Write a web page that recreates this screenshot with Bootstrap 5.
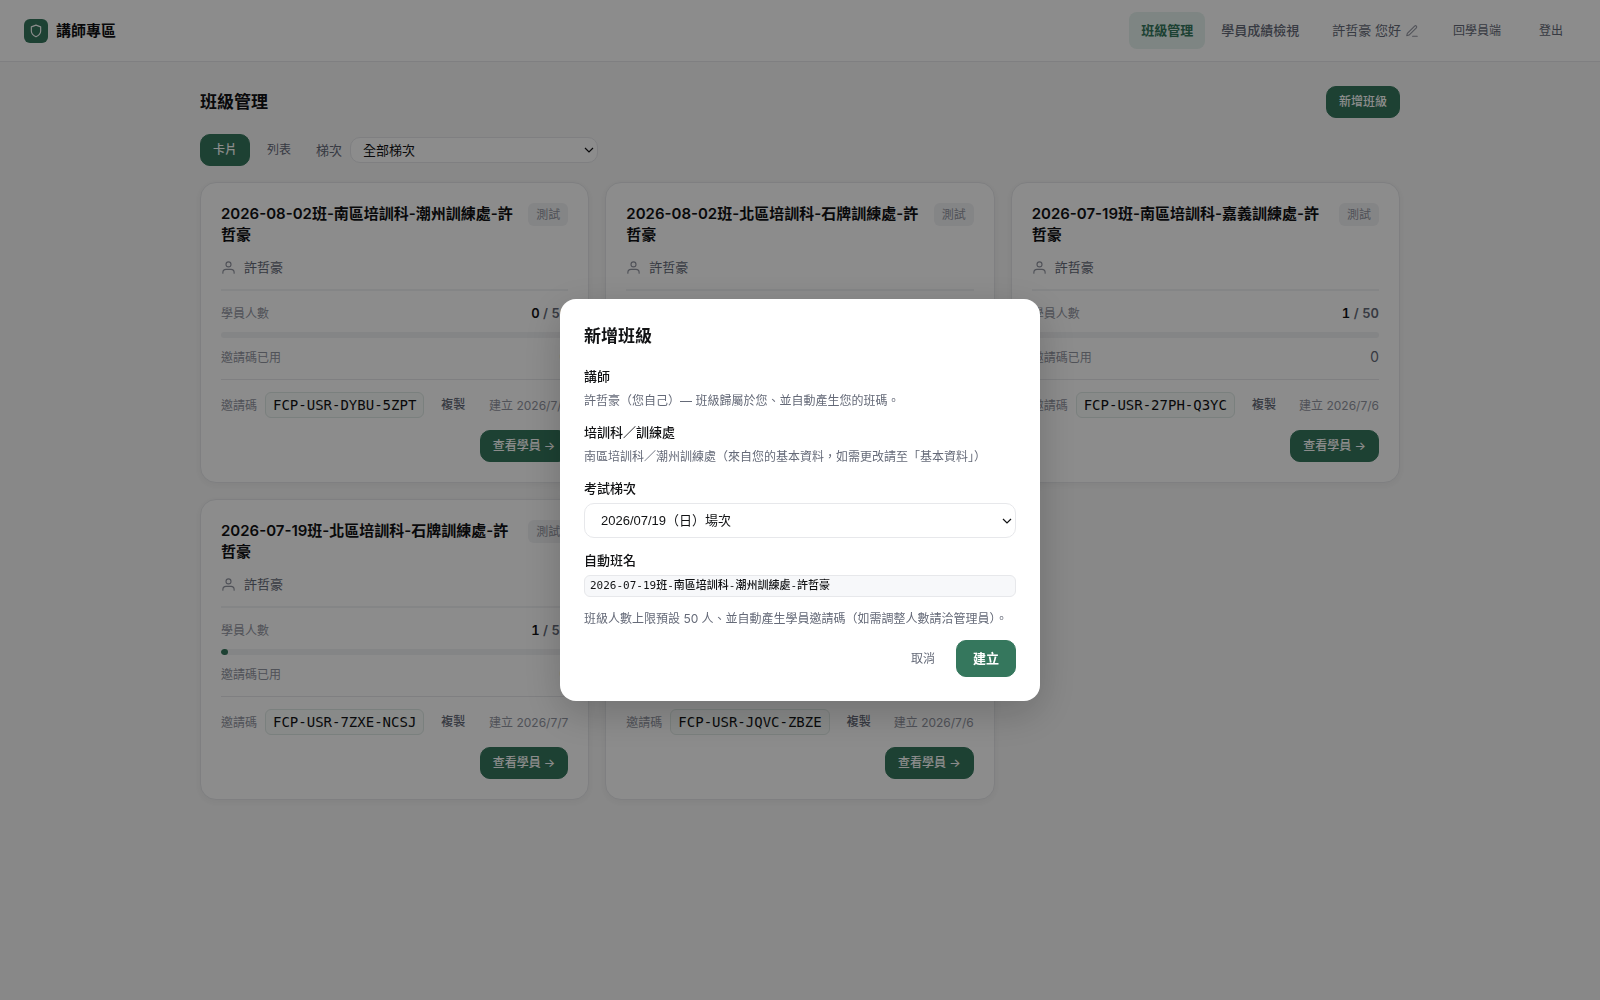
<!DOCTYPE html>
<html lang="zh-Hant">
<head>
<meta charset="utf-8">
<meta name="viewport" content="width=device-width, initial-scale=1">
<title>講師專區 - 班級管理</title>
<link href="https://cdn.jsdelivr.net/npm/bootstrap@5.3.0/dist/css/bootstrap.min.css" rel="stylesheet">
<style>
:root{--ink:#111214;--soft:#656a78;--faint:#9295a1;--line:#e7e8eb;--green:#35775d;--mist:#f1f2f4}
body{font-family:Inter,"Noto Sans CJK TC",sans-serif;font-size:13px;line-height:21px;color:var(--ink);background:#f8f8f8}
h1,h2,h3,p{margin:0}
.topbar{background:#fff;border-bottom:1px solid var(--line);padding:12px 24px}
.bar-items{gap:12px}
.brand-mark{width:24px;height:24px;border-radius:6px;background:var(--green);color:#fff}
.brand-name{font-size:15px;font-weight:600;color:var(--ink)}
.tab{padding:8px 12px;border-radius:8px;color:var(--soft);font-weight:500;text-decoration:none}
.tab.active{background:#e5f3ee;color:var(--green);font-weight:600}
.me{padding:0 9px;color:var(--soft);text-decoration:none}
.me svg{color:var(--faint)}
.btn{--bs-btn-font-size:12px;--bs-btn-line-height:20px;--bs-btn-padding-x:12px;--bs-btn-padding-y:5px;--bs-btn-border-radius:10px;--bs-btn-font-weight:500}
.btn-green{--bs-btn-color:#fff;--bs-btn-bg:var(--green);--bs-btn-border-color:var(--green);--bs-btn-hover-color:#fff;--bs-btn-hover-bg:#2b654e}
.btn-plain{--bs-btn-color:var(--soft);--bs-btn-hover-color:var(--ink);--bs-btn-font-weight:400}
.btn-main{--bs-btn-font-size:13px;--bs-btn-line-height:21px;--bs-btn-font-weight:600;--bs-btn-padding-x:16px;--bs-btn-padding-y:7px}
.btn-copy{--bs-btn-padding-x:8px;--bs-btn-padding-y:2px;--bs-btn-font-weight:500}
.page{max-width:1200px;padding:24px 0}
.page-title{font-size:17px;line-height:27px;font-weight:600}
.pick-name{color:var(--soft)}
.pick{appearance:none;font-family:"Liberation Sans","Noto Sans CJK TC",sans-serif;font-size:13px;color:var(--ink);border:1px solid var(--line);border-radius:10px;background:#fff url("data:image/svg+xml,%3Csvg xmlns='http://www.w3.org/2000/svg' viewBox='0 0 10 6' fill='none' stroke='%23111214' stroke-width='1.2'%3E%3Cpath d='M1 1l4 4 4-4'/%3E%3C/svg%3E") no-repeat right 3px center/10px 6px}
.pick-sm{width:248px;padding:2px 12px;height:26px}
.pick-lg{width:100%;padding:6px 16px;height:35px}
.classes{display:grid;grid-template-columns:repeat(3,minmax(0,1fr));gap:16px}
.class-card{background:#fff;border:1px solid var(--line);border-radius:16px;padding:20px;box-shadow:0 2px 8px rgba(0,0,0,.05)}
.class-head{gap:12px}
.class-name{font-size:15px;line-height:21px;font-weight:600}
.tag{font-size:12px;line-height:19px;padding:2px 8px;border-radius:6px;background:var(--mist);color:var(--faint)}
.owner{color:var(--soft);line-height:20px;padding-bottom:12px;border-bottom:2px solid var(--mist)}
.owner svg{color:var(--faint)}
.stats{padding:11px 0;border-bottom:1px solid var(--line)}
.note{font-size:12px;line-height:19px;color:var(--faint)}
.num{font-size:14px;line-height:22px;color:var(--soft);font-variant-numeric:tabular-nums}
.seats{font-size:13px;font-weight:600}
.seats b{color:var(--ink);font-weight:600}
.meter{height:6px;border-radius:3px;background:var(--mist);overflow:hidden}
.meter span{display:block;height:6px;border-radius:3px;background:var(--green)}
.code{font-family:"DejaVu Sans Mono",monospace;font-size:14px;line-height:20px;padding:2px 7px;border:1px solid #dfe9e5;border-radius:6px;background:#f8fbfa;color:var(--ink)}
.modal-backdrop{--bs-backdrop-opacity:.45}
.modal{--bs-modal-width:480px}
.modal-content{border:0;border-radius:16px;padding:24px;box-shadow:0 12px 40px rgba(0,0,0,.2);color:var(--ink)}
.fields{gap:12px}
.field-name{font-weight:500;line-height:21px}
.hint{font-size:12px;line-height:19px;color:var(--soft)}
.auto-name{display:block;font-family:"DejaVu Sans Mono","Noto Sans CJK TC",monospace;font-weight:500;font-size:11px;line-height:16px;padding:2px 5px;border:1px solid var(--line);border-radius:6px;background:#f7f8fa}
</style>
<script src="https://cdn.jsdelivr.net/npm/bootstrap@5.3.0/dist/js/bootstrap.bundle.min.js" defer></script>
</head>
<body class="modal-open">
<header class="topbar d-flex justify-content-between align-items-center">
  <a class="d-flex align-items-center gap-2 text-decoration-none" href="#">
    <span class="brand-mark d-flex align-items-center justify-content-center"><svg width="14" height="14" viewBox="0 0 24 24" fill="none" stroke="currentColor" stroke-width="2" stroke-linejoin="round"><path d="M12 22s8-4 8-10V5l-8-3-8 3v7c0 6 8 10 8 10z"/></svg></span>
    <span class="brand-name">講師專區</span>
  </a>
  <div class="bar-items d-flex align-items-center">
    <nav class="d-flex gap-1">
      <a class="tab active" href="#">班級管理</a>
      <a class="tab" href="#">學員成績檢視</a>
    </nav>
    <a class="me d-flex align-items-center gap-1" href="#">許哲豪 您好
      <svg width="14" height="14" viewBox="0 0 24 24" fill="none" stroke="currentColor" stroke-width="1.8" stroke-linecap="round" stroke-linejoin="round"><path d="M13 21h8"/><path d="M16.500 3.500a2.100 2.100 0 0 1 3 3L7 19l-4 1 1-4z"/></svg></a>
    <button class="btn btn-plain" type="button">回學員端</button>
    <button class="btn btn-plain" type="button">登出</button>
  </div>
</header>

<main class="page container-fluid">
  <div class="d-flex justify-content-between align-items-center mb-3">
    <h1 class="page-title">班級管理</h1>
    <button class="btn btn-green" type="button">新增班級</button>
  </div>
  <div class="d-flex align-items-center mb-3">
    <div class="d-flex gap-1 me-2 pe-1">
      <button class="btn btn-green" type="button">卡片</button>
      <button class="btn btn-plain" type="button">列表</button>
    </div>
    <label class="pick-name me-2" for="batch">梯次</label>
    <select class="pick pick-sm" id="batch"><option>全部梯次</option></select>
  </div>
  <div class="classes" id="classes"></div>
</main>

<template id="card">
  <article class="class-card">
    <div class="class-head d-flex justify-content-between align-items-start mb-2 pb-1">
      <h2 class="class-name"></h2><span class="tag flex-shrink-0">測試</span>
    </div>
    <div class="owner d-flex align-items-center gap-2">
      <svg width="15" height="15" viewBox="0 0 24 24" fill="none" stroke="currentColor" stroke-width="1.8" stroke-linecap="round"><circle cx="12" cy="7" r="4"/><path d="M3 21v-1a5 5 0 0 1 5-5h8a5 5 0 0 1 5 5v1"/></svg>許哲豪
    </div>
    <div class="stats d-flex flex-column gap-2">
      <div class="d-flex justify-content-between align-items-center"><span class="note">學員人數</span><span class="num seats"><b class="joined"></b> / 50</span></div>
      <div class="meter"><span></span></div>
      <div class="d-flex justify-content-between align-items-center"><span class="note">邀請碼已用</span><span class="num">0</span></div>
    </div>
    <div class="d-flex align-items-center gap-2 py-2 my-1">
      <span class="note">邀請碼</span><span class="code"></span>
      <button class="btn btn-plain btn-copy" type="button">複製</button>
      <span class="note made ms-auto"></span>
    </div>
    <div class="d-flex justify-content-end"><button class="btn btn-green" type="button">查看學員 →</button></div>
  </article>
</template>

<div class="modal-backdrop show"></div>
<div class="modal d-block" tabindex="-1" role="dialog" aria-modal="true" aria-labelledby="dlgTitle">
  <div class="modal-dialog modal-dialog-centered">
    <form class="modal-content">
      <h2 class="page-title mb-3" id="dlgTitle">新增班級</h2>
      <div class="fields d-flex flex-column">
        <div class="d-flex flex-column gap-1"><div class="field-name">講師</div><p class="hint">許哲豪（您自己）— 班級歸屬於您、並自動產生您的班碼。</p></div>
        <div class="d-flex flex-column gap-1"><div class="field-name">培訓科／訓練處</div><p class="hint">南區培訓科／潮州訓練處（來自您的基本資料，如需更改請至「基本資料」）</p></div>
        <div class="d-flex flex-column gap-1"><label class="field-name" for="exam">考試梯次</label><select class="pick pick-lg" id="exam"><option>2026/07/19（日）場次</option></select></div>
        <div class="d-flex flex-column gap-1"><div class="field-name">自動班名</div><span class="auto-name">2026-07-19班-南區培訓科-潮州訓練處-許哲豪</span></div>
        <p class="hint">班級人數上限預設 50 人、並自動產生學員邀請碼（如需調整人數請洽管理員）。</p>
        <div class="d-flex justify-content-end align-items-center gap-2">
          <button class="btn btn-plain" type="button">取消</button>
          <button class="btn btn-green btn-main" type="button">建立</button>
        </div>
      </div>
    </form>
  </div>
</div>
<script>
const classes = [
  ["2026-08-02班-南區培訓科-潮州訓練處-許哲豪", 0, "FCP-USR-DYBU-5ZPT", "2026/7/7", 0],
  ["2026-08-02班-北區培訓科-石牌訓練處-許哲豪", 0, "FCP-USR-K8MW-4RTN", "2026/7/7", 0],
  ["2026-07-19班-南區培訓科-嘉義訓練處-許哲豪", 1, "FCP-USR-27PH-Q3YC", "2026/7/6", 0],
  ["2026-07-19班-北區培訓科-石牌訓練處-許哲豪", 1, "FCP-USR-7ZXE-NCSJ", "2026/7/7", 2],
  ["2026-07-19班-南區培訓科-潮州訓練處-許哲豪", 1, "FCP-USR-JQVC-ZBZE", "2026/7/6", 2]
];
const list = document.getElementById("classes");
for (const [name, joined, code, made, percent] of classes) {
  const card = document.getElementById("card").content.cloneNode(true);
  card.querySelector(".class-name").textContent = name;
  card.querySelector(".joined").textContent = joined;
  card.querySelector(".meter span").style.width = percent + "%";
  card.querySelector(".code").textContent = code;
  card.querySelector(".made").textContent = "建立 " + made;
  list.append(card);
}
</script>
</body>
</html>
